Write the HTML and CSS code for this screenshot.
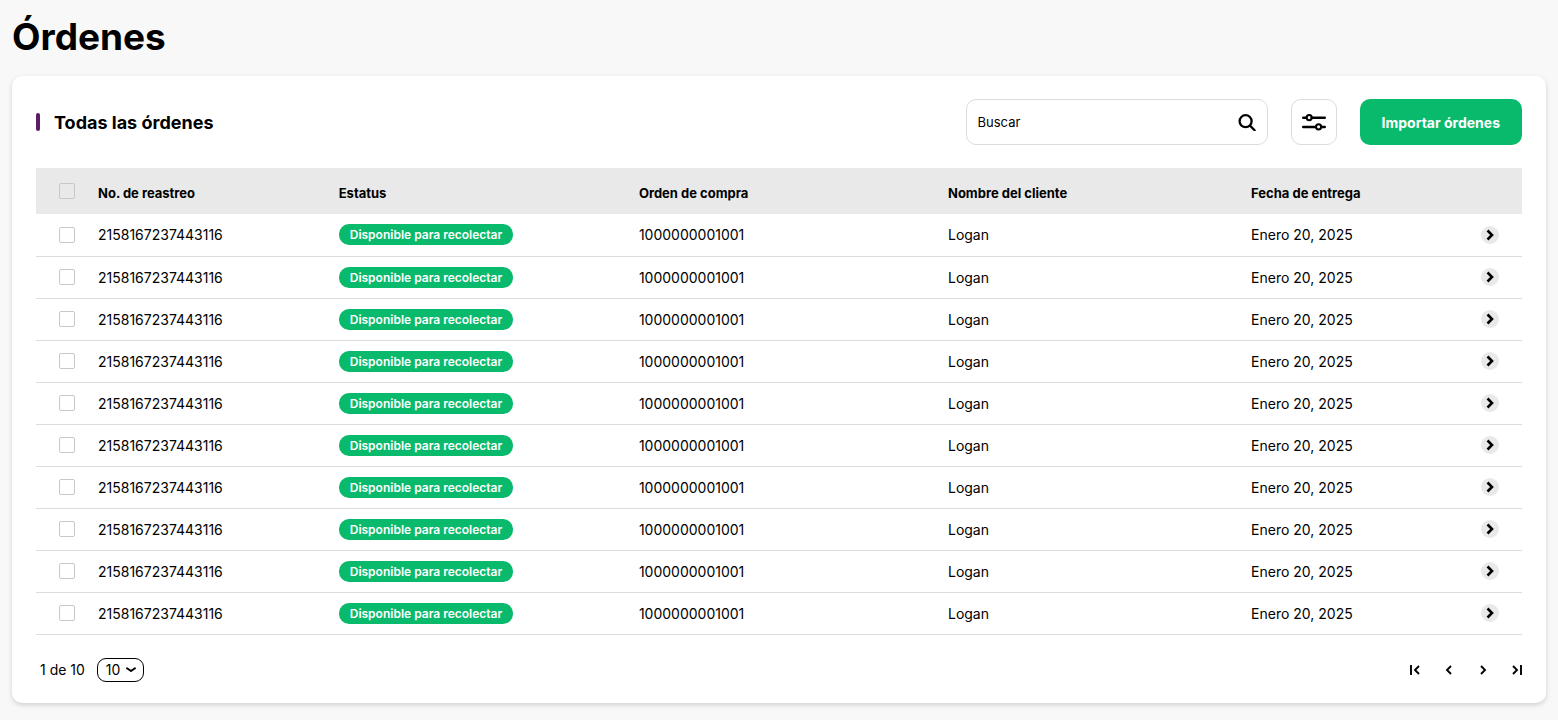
FILE: index.html
```
<!DOCTYPE html>
<html lang="es">
<head>
    <meta charset="UTF-8">
    <meta name="viewport" content="width=device-width, initial-scale=1.0">
    <title>Órdenes</title>
    <link rel="stylesheet" href="styles.css">
</head>
<body>
    <h1 class="page-title">Órdenes</h1>

    <main class="card">
        <div class="toolbar">
            <h2 class="section-title">Todas las órdenes</h2>
            <form class="search" role="search">
                <input class="search-input" type="search" placeholder="Buscar" aria-label="Buscar">
                <button class="icon-button" type="button" aria-label="Buscar órdenes">
                    <svg width="18" height="18" viewBox="0 0 18 18" fill="none" stroke="currentColor" stroke-width="2.3">
                        <circle cx="7.6" cy="8.2" r="6"/>
                        <path d="M12 12.6L16.6 17.2" stroke-linecap="round"/>
                    </svg>
                </button>
            </form>
            <button class="filter-button" type="button" aria-label="Filtros">
                <svg width="24" height="18" viewBox="0 0 24 18" fill="none" stroke="currentColor" stroke-width="2.4">
                    <path d="M1.2 4.8H4.5M9.5 4.8H22.8M1.2 14H14M19 14H22.8" stroke-linecap="round"/>
                    <circle cx="7.2" cy="4.6" r="2.6" stroke-width="2"/>
                    <circle cx="16.6" cy="13.8" r="2.6" stroke-width="2"/>
                </svg>
            </button>
            <button class="primary-button" type="button">Importar órdenes</button>
        </div>

        <table class="orders">
            <thead>
                <tr>
                    <th class="col-check"><input class="check" type="checkbox" aria-label="Seleccionar todas"></th>
                    <th class="col-tracking">No. de reastreo</th>
                    <th class="col-status">Estatus</th>
                    <th class="col-order">Orden de compra</th>
                    <th class="col-client">Nombre del cliente</th>
                    <th>Fecha de entrega</th>
                    <th class="col-action"></th>
                </tr>
            </thead>
            <tbody id="orderRows"></tbody>
        </table>

        <div class="footer">
            <label for="pageSize">1 de 10</label>
            <span class="page-size">
                <select id="pageSize">
                    <option>10</option>
                    <option>20</option>
                    <option>50</option>
                </select>
                <svg width="10" height="6" viewBox="0 0 10 6" fill="none" stroke="currentColor" stroke-width="2">
                    <path d="M1 1.2L5 4L9 1.2" stroke-linecap="round" stroke-linejoin="round"/>
                </svg>
            </span>
            <nav class="pager" aria-label="Paginación">
                <button class="icon-button" type="button" aria-label="Primera página">
                    <svg width="10" height="10" viewBox="0 0 10 10" fill="none" stroke="currentColor" stroke-width="1.9">
                        <path d="M1 0V10M9 1L5 5L9 9"/>
                    </svg>
                </button>
                <button class="icon-button" type="button" aria-label="Página anterior">
                    <svg width="10" height="10" viewBox="0 0 10 10" fill="none" stroke="currentColor" stroke-width="1.9">
                        <path d="M7 1L3 5L7 9"/>
                    </svg>
                </button>
                <button class="icon-button" type="button" aria-label="Página siguiente">
                    <svg width="10" height="10" viewBox="0 0 10 10" fill="none" stroke="currentColor" stroke-width="1.9">
                        <path d="M3 1L7 5L3 9"/>
                    </svg>
                </button>
                <button class="icon-button" type="button" aria-label="Última página">
                    <svg width="10" height="10" viewBox="0 0 10 10" fill="none" stroke="currentColor" stroke-width="1.9">
                        <path d="M9 0V10M1 1L5 5L1 9"/>
                    </svg>
                </button>
            </nav>
        </div>
    </main>

    <script>
        const orders = Array.from({ length: 10 }, () => ({
            tracking: '2158167237443116',
            status: 'Disponible para recolectar',
            order: '1000000001001',
            client: 'Logan',
            date: 'Enero 20, 2025'
        }));

        document.getElementById('orderRows').innerHTML = orders.map((o, i) => `
            <tr>
                <td><input class="check" type="checkbox" aria-label="Seleccionar orden ${i + 1}"></td>
                <td>${o.tracking}</td>
                <td><span class="badge">${o.status}</span></td>
                <td>${o.order}</td>
                <td>${o.client}</td>
                <td>${o.date}</td>
                <td class="col-action">
                    <button class="detail-button" type="button" aria-label="Ver orden ${i + 1}">
                        <svg width="8" height="12" viewBox="0 0 8 12" fill="none" stroke="currentColor" stroke-width="2.6">
                            <path d="M1.5 1.5L6 6L1.5 10.5"/>
                        </svg>
                    </button>
                </td>
            </tr>`).join('');
    </script>
</body>
</html>
```
FILE: styles.css
```
* {
    box-sizing: border-box;
}
body {
    margin: 0;
    padding: 12px;
    background-color: #f8f8f8;
    color: #000;
    font-family: Inter, sans-serif;
    font-size: 14px;
}
button, input, select {
    font: inherit;
    color: inherit;
}
button {
    cursor: pointer;
}
svg {
    display: block;
}
.page-title {
    margin: 0 0 14px;
    font-size: 37px;
    line-height: 50px;
}
.card {
    padding: 23px 24px 21px;
    background-color: #fff;
    border-radius: 10px;
    box-shadow: 0 2px 5px rgba(0, 0, 0, 0.16);
}
.toolbar {
    display: flex;
    align-items: center;
    gap: 23px;
    margin-bottom: 23px;
}
.section-title {
    display: flex;
    align-items: center;
    gap: 14px;
    margin: 0 auto 0 0;
    font-size: 18px;
}
.section-title::before {
    content: "";
    width: 4px;
    height: 18px;
    background-color: #5e1c64;
    border-radius: 2px;
}
.search {
    display: flex;
    align-items: center;
    width: 302px;
    height: 46px;
    padding: 0 11px;
    border: 1px solid #dcdcdc;
    border-radius: 10px;
}
.search-input {
    flex: 1;
    min-width: 0;
    padding: 0;
    border: 0;
    outline: 0;
    background: none;
    font-size: 13px;
}
.search-input::placeholder {
    color: #000;
}
.icon-button {
    padding: 0;
    border: 0;
    background: none;
}
.filter-button {
    display: grid;
    place-items: center;
    width: 46px;
    height: 46px;
    padding: 0;
    border: 1px solid #dcdcdc;
    border-radius: 10px;
    background-color: #fff;
}
.primary-button {
    height: 46px;
    padding: 0 22px;
    border: 0;
    border-radius: 10px;
    background-color: #0aba6c;
    color: #fff;
    font-weight: 700;
}
.orders {
    width: 100%;
    table-layout: fixed;
    border-collapse: collapse;
}
.orders th, .orders td {
    padding: 0;
    text-align: left;
}
.orders th {
    height: 46px;
    background-color: #e9e9e9;
    font-size: 13px;
    font-weight: 700;
}
.orders th:not(.col-check) {
    padding-top: 3px;
}
.orders td {
    height: 42px;
    border-bottom: 1px solid #dcdcdc;
}
.orders .col-check {
    width: 62px;
}
.orders .col-tracking {
    width: 16.2%;
}
.orders .col-status {
    width: 20.2%;
}
.orders .col-order {
    width: 20.8%;
}
.orders .col-client {
    width: 20.4%;
}
.orders .col-action {
    width: 64px;
    padding-right: 23px;
}
.check {
    appearance: none;
    display: block;
    width: 16px;
    height: 16px;
    margin: 0 0 0 23px;
    border: 1px solid #c8c8c8;
    border-radius: 2px;
}
.check:checked {
    background-color: #0aba6c;
}
.badge {
    display: block;
    width: fit-content;
    padding: 0 11px;
    border-radius: 10px;
    background-color: #0aba6c;
    color: #fff;
    font-size: 12px;
    font-weight: 600;
    line-height: 21px;
}
.detail-button {
    display: grid;
    place-items: center;
    width: 18px;
    height: 18px;
    margin-left: auto;
    padding: 0;
    border: 0;
    border-radius: 50%;
    background-color: #e9e9e9;
}
.footer {
    display: flex;
    align-items: center;
    gap: 12px;
    margin-top: 23px;
    padding-left: 4px;
}
.page-size {
    display: grid;
    align-items: center;
}
.page-size select, .page-size svg {
    grid-area: 1 / 1;
}
.page-size select {
    appearance: none;
    width: 47px;
    height: 24px;
    padding: 0 0 0 8px;
    border: 1px solid #000;
    border-radius: 9px;
    background: none;
}
.page-size svg {
    justify-self: end;
    margin-right: 8px;
    pointer-events: none;
}
.pager {
    display: flex;
    gap: 24px;
    margin-left: auto;
}
```
